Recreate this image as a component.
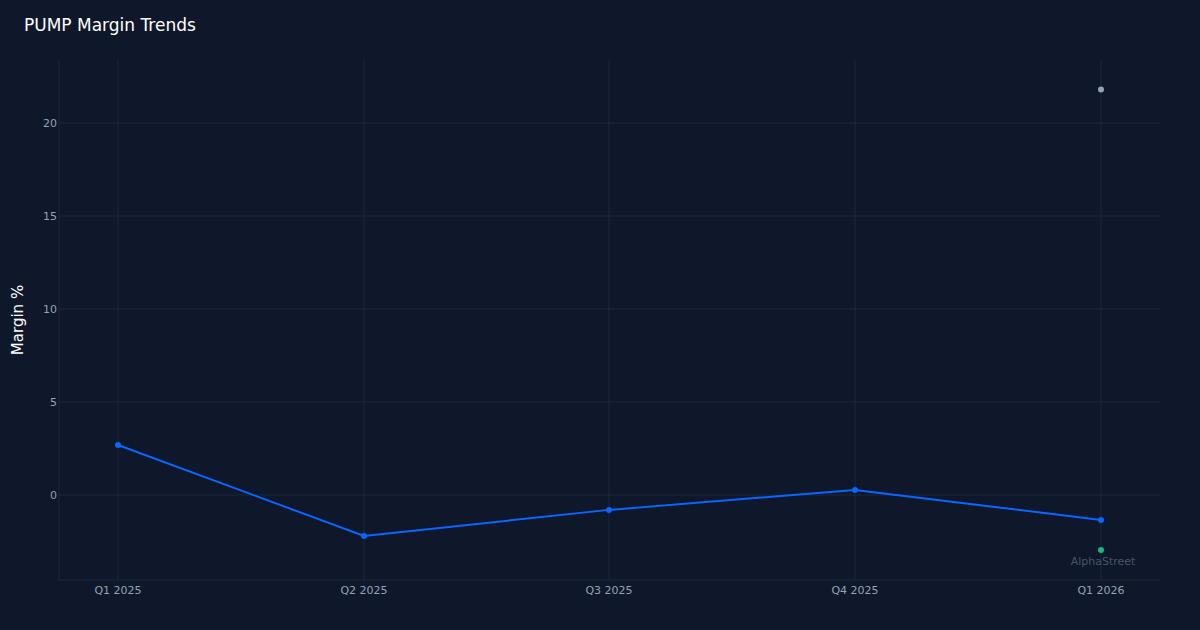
const xs = [118, 364, 609, 855, 1101];
const labels = ["Q1 2025", "Q2 2025", "Q3 2025", "Q4 2025", "Q1 2026"];
const vals = [2.69, -2.2, -0.8, 0.27, -1.34];
const y = (v: number) => 495 - v * 18.6;

export default function App() {
  const pts = vals.map((v, i) => `${xs[i]},${y(v)}`).join(" ");
  return (
    <div className="relative w-[1200px] h-[630px] bg-[#0f172a] overflow-hidden" style={{ fontFamily: "'DejaVu Sans', sans-serif" }}>
      <div className="absolute left-[24px] top-[13px] text-[17px] text-white">PUMP Margin Trends</div>
      <svg width="1200" height="630" className="absolute inset-0">
        {[0, 5, 10, 15, 20].map((t) => (
          <g key={t}>
            <line x1="59" x2="1160" y1={y(t)} y2={y(t)} stroke="#1e293b" />
            <text x="57" y={y(t) + 4} textAnchor="end" fontSize="11" fill="#94a3b8" dx="-0">{t}</text>
          </g>
        ))}
        {xs.map((x, i) => (
          <g key={x}>
            <line x1={x} x2={x} y1="60" y2="580" stroke="#1e293b" />
            <text x={x} y="594" textAnchor="middle" fontSize="11" fill="#94a3b8">{labels[i]}</text>
          </g>
        ))}
        <line x1="59" x2="59" y1="60" y2="580" stroke="#1e293b" />
        <line x1="59" x2="1160" y1="580" y2="580" stroke="#1e293b" />
        <text x="23" y="320" transform="rotate(-90 23 320)" textAnchor="middle" fontSize="15" fill="#ffffff">Margin %</text>
        <polyline points={pts} fill="none" stroke="#0a66ff" strokeWidth="2" />
        {vals.map((v, i) => <circle key={i} cx={xs[i]} cy={y(v)} r="3" fill="#0a66ff" />)}
        <circle cx="1101" cy={y(21.8)} r="3" fill="#94a3b8" />
        <circle cx="1101" cy={y(-2.96)} r="3" fill="#10b981" />
        <text x="1103" y="565" textAnchor="middle" fontSize="11" fill="#475569">AlphaStreet</text>
      </svg>
    </div>
  );
}
